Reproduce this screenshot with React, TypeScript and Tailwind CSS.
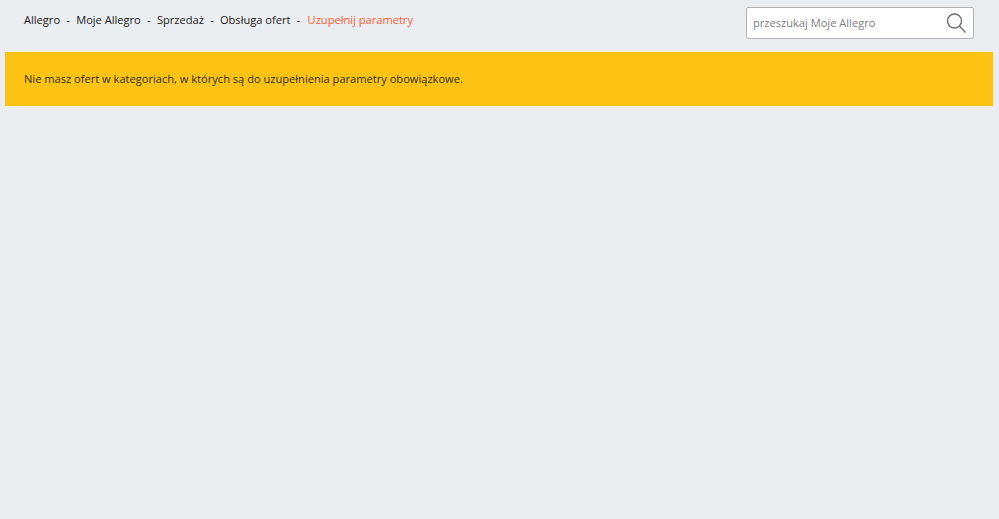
import React from "react";

const crumbs = ["Allegro", "Moje Allegro", "Sprzedaż", "Obsługa ofert"];

const App = () => {
  return (
    <div className="min-h-[519px] bg-[#ebeef1] font-['Open_Sans',sans-serif] text-[11.1px] text-[#1b1b1b]">
      <div className="flex h-[51px] items-start justify-between pl-6 pr-[25px]">
        <nav className="flex items-center pt-[11px] leading-[17px]">
          {crumbs.map((crumb) => (
            <React.Fragment key={crumb}>
              <a>{crumb}</a>
              <span className="mx-[6.25px]">-</span>
            </React.Fragment>
          ))}
          <a className="ml-[1px] text-[#ff5a33]">Uzupełnij parametry</a>
        </nav>
        <div className="mt-[7px] flex h-8 w-[228px] items-center justify-between rounded-[2px] border border-[#b4b4b4] bg-white pl-[6px] pr-[7px]">
          <span className="pt-[1px] text-[#808080]">przeszukaj Moje Allegro</span>
          <svg width="20" height="20" viewBox="0 0 20 20" fill="none" stroke="#6f6f6f" strokeWidth="1.4">
            <circle cx="8.5" cy="8" r="7" />
            <path d="M13.5 13l6 6.5" />
          </svg>
        </div>
      </div>
      <div className="ml-[4px] mr-[5px] flex h-[56px] items-center border border-[#f4efd8] bg-[#fcc314] pl-[19px] text-[#33301c]">
        <span className="pt-[1px]">Nie masz ofert w kategoriach, w których są do uzupełnienia parametry obowiązkowe.</span>
      </div>
    </div>
  );
};

export default App;
